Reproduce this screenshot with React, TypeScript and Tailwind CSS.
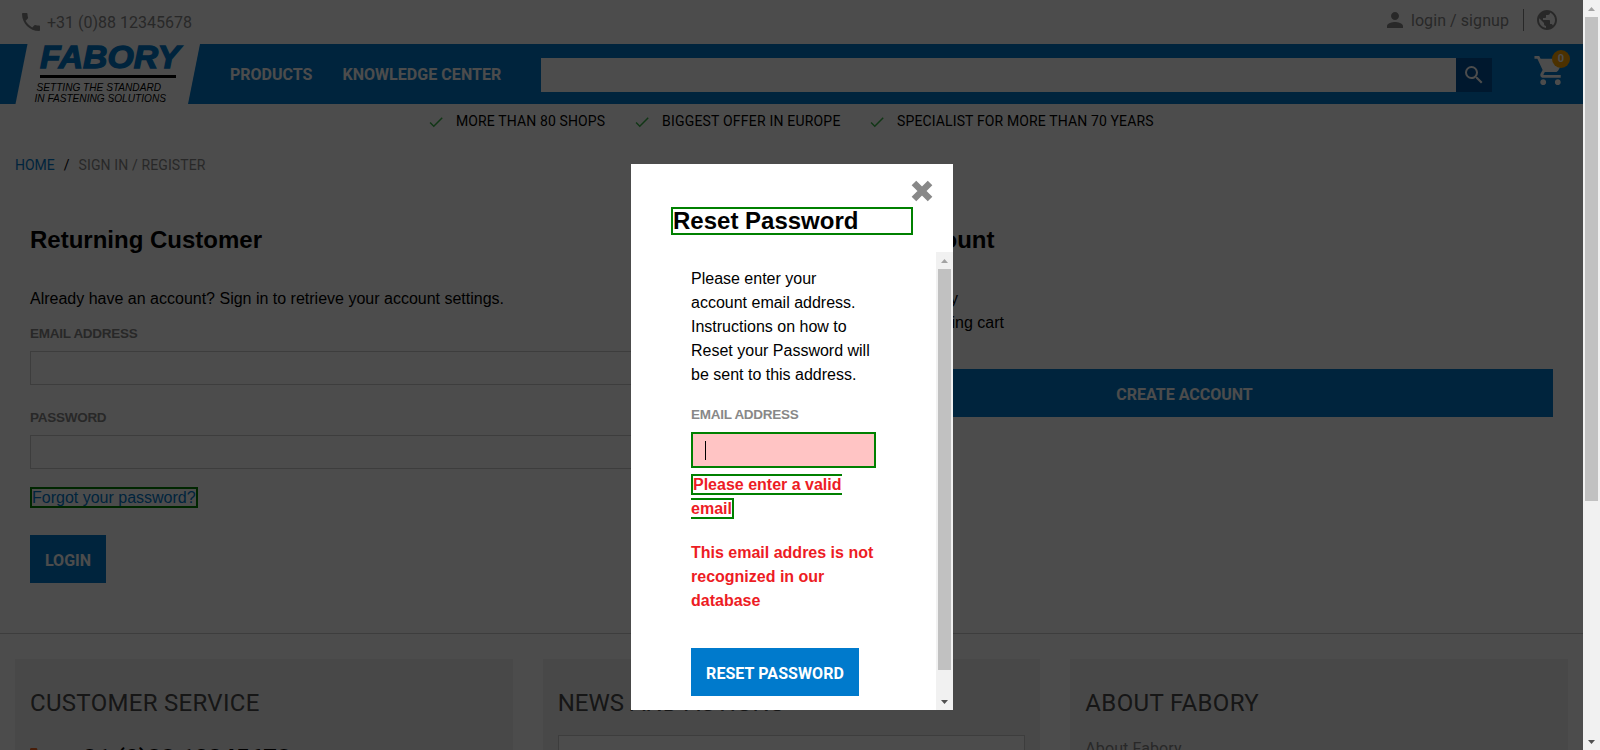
import React from "react";
import { MdPhone, MdPerson, MdPublic, MdSearch, MdShoppingCart, MdCheck } from "react-icons/md";

const arial = "font-['Liberation_Sans',Arial,sans-serif]";
const roboto = "font-['Roboto',sans-serif]";

function Logo() {
  return (
    <svg width="202" height="60" viewBox="0 0 202 60" className="block shrink-0">
      <polygon points="27.500,0 200,0 188,60 15.500,60" fill="#fff" />
      <text x="40" y="24.4" fontFamily="Liberation Sans, sans-serif" fontWeight="700" fontStyle="italic" fontSize="31.500" textLength="140" lengthAdjust="spacingAndGlyphs" fill="#007acc" stroke="#007acc" strokeWidth="1.3">FABORY</text>
      <rect x="40" y="31" width="136" height="3" fill="#000" />
      <text x="36.5" y="47" fontFamily="Liberation Sans, sans-serif" fontStyle="italic" fontSize="10.5" textLength="124.500" lengthAdjust="spacingAndGlyphs">SETTING THE STANDARD</text>
      <text x="34.5" y="58.3" fontFamily="Liberation Sans, sans-serif" fontStyle="italic" fontSize="10.5" textLength="131.500" lengthAdjust="spacingAndGlyphs">IN FASTENING SOLUTIONS</text>
    </svg>
  );
}

function Scrollbar({ thumb }: { thumb: string }) {
  return (
    <div className="flex h-full w-[17px] shrink-0 flex-col items-center bg-[#f1f1f1]">
      <svg width="17" height="17" className="block shrink-0"><path d="M5 11h7L8.500 7z" fill="#a3a3a3" /></svg>
      <div className={`w-[13px] shrink-0 bg-[#c1c1c1] ${thumb}`} />
      <div className="grow" />
      <svg width="17" height="17" className="block shrink-0"><path d="M5 7h7L8.500 11z" fill="#505050" /></svg>
    </div>
  );
}

function Header() {
  return (
    <header className={roboto}>
      <div className="flex h-11 items-center justify-between pl-[19px] pr-6 text-[16px] text-[#888]">
        <div className="flex items-center gap-1">
          <MdPhone size={24} />
          <span className="pt-px">+31 (0)88 12345678</span>
        </div>
        <div className="flex h-full items-center pb-1">
          <MdPerson size={24} />
          <span className="ml-1 pt-px tracking-[0.07px]">login / signup</span>
          <div className="ml-[14px] h-[22px] w-px bg-[#888]" />
          <MdPublic size={24} className="ml-[11px]" />
        </div>
      </div>
      <div className="flex h-[60px] items-start bg-[#007acc] text-white">
        <Logo />
        <nav className="flex h-full items-center gap-[30px] pl-7 pt-[2px] text-[16px] font-bold">
          <a>PRODUCTS</a>
          <a className="tracking-[0.05px]">KNOWLEDGE CENTER</a>
        </nav>
        <div className="ml-auto mt-[14px] h-[34px] w-[915px] bg-white" />
        <div className="mt-[14px] flex h-[34px] w-9 items-center justify-center bg-[#005299]">
          <MdSearch size={24} />
        </div>
        <div className="relative ml-[41px] mr-[15px] mt-[9px] w-[35px]">
          <MdShoppingCart size={35} />
          <span className="absolute -top-[3px] left-[19px] flex size-[18px] items-center justify-center rounded-full bg-[#ffa500] text-[11px] font-bold">0</span>
        </div>
      </div>
    </header>
  );
}

function Usp({ className, children }: { className: string; children: React.ReactNode }) {
  return (
    <div className={`flex items-center gap-[11px] whitespace-nowrap ${className}`}>
      <MdCheck size={18} className="shrink-0 text-[#39b54a]" />
      <span>{children}</span>
    </div>
  );
}

function Usps() {
  return (
    <div className={`flex h-[34px] items-center pl-[427px] pt-px text-[14px] ${roboto}`}>
      <Usp className="w-[206px] tracking-[0.12px]">MORE THAN 80 SHOPS</Usp>
      <Usp className="w-[235px] tracking-[0.2px]">BIGGEST OFFER IN EUROPE</Usp>
      <Usp className="tracking-[0.13px]">SPECIALIST FOR MORE THAN 70 YEARS</Usp>
    </div>
  );
}

function Label({ children }: { children: React.ReactNode }) {
  return <label className="block h-6 text-[13.5px] font-bold leading-6 tracking-[-0.27px] text-[#888]">{children}</label>;
}

function Columns() {
  return (
    <main className={`flex h-[448px] border-b border-[#ccc] px-[30px] pt-10 text-[16px] leading-6 ${arial}`}>
      <section className="w-[746px]">
        <h2 className="text-[24px] font-bold leading-7">Returning Customer</h2>
        <p className="mt-[33px]">Already have an account? Sign in to retrieve your account settings.</p>
        <div className="mt-[11px]"><Label>EMAIL ADDRESS</Label></div>
        <div className="mt-[5px] h-[34px] border border-[#ccc]" />
        <div className="mt-[21px]"><Label>PASSWORD</Label></div>
        <div className="mt-[5px] h-[34px] border border-[#ccc]" />
        <a className="mt-[18px] block h-[21px] w-[168px] border-2 border-[#008000] leading-[17px] text-[#007acc]">Forgot your password?</a>
        <button className={`mt-[27px] block h-12 w-[76px] bg-[#007acc] pt-[3px] font-bold text-white ${roboto}`}>LOGIN</button>
      </section>
      <section className="ml-[40px] w-[737px]">
        <h2 className="pl-[2px] text-[24px] font-bold leading-7">Create Account</h2>
        <p className="mt-[33px] w-[142px] text-right">View order history</p>
        <p className="w-[188px] text-right">Save your shopping cart</p>
        <button className={`mt-[34px] block h-12 w-full bg-[#007acc] pt-[3px] font-bold text-white ${roboto}`}>CREATE ACCOUNT</button>
      </section>
    </main>
  );
}

function Footer() {
  return (
    <footer className={`grid grid-cols-3 gap-[30px] px-[15px] pt-[25px] ${roboto}`}>
      <section className="h-[200px] bg-[#f2f2f2] px-[15px] pt-[28px]">
        <h3 className="text-[24px] leading-8 tracking-[0.3px] text-[#4a4a4a]">CUSTOMER SERVICE</h3>
        <div className="mt-[25px] flex items-start gap-3 text-[24px] font-bold leading-7">
          <MdPhone size={32} className="-ml-1 text-[#f26522]" />
          <span>+31 (0)88 12345678</span>
        </div>
      </section>
      <section className="h-[200px] bg-[#f2f2f2] px-[15px] pt-[28px]">
        <h3 className="text-[24px] leading-8 text-[#4a4a4a]">NEWS AND ACTIONS</h3>
        <div className="mt-4 h-[34px] border border-[#ccc] bg-white" />
      </section>
      <section className="h-[200px] bg-[#f2f2f2] px-[15px] pt-[28px]">
        <h3 className="text-[24px] leading-8 tracking-[0.35px] text-[#4a4a4a]">ABOUT FABORY</h3>
        <p className="mt-[18px] text-[16px] leading-6 tracking-[0.1px] text-[#888]">About Fabory</p>
      </section>
    </footer>
  );
}

function Modal() {
  return (
    <div className={`absolute left-[631px] top-[164px] flex h-[546px] w-[322px] flex-col bg-white text-[16px] leading-6 text-black ${arial}`}>
      <div className="flex h-[88px] flex-col px-10">
        <svg width="22" height="22" viewBox="0 0 22 22" className="-mr-[20px] mt-4 self-end">
          <path d="M5.250 5.250l11.500 11.500M16.750 5.250l-11.500 11.500" stroke="#888" strokeWidth="6.500" strokeLinecap="square" />
        </svg>
        <h2 className="mt-[5px] h-7 border-2 border-[#008000] text-[24px] font-bold leading-6">Reset Password</h2>
      </div>
      <div className="flex h-[458px]">
        <div className="w-[305px] pl-[60px] pt-[15px]">
          <p className="w-[185px]">Please enter your account email address. Instructions on how to Reset your Password will be sent to this address.</p>
          <div className="mt-4"><Label>EMAIL ADDRESS</Label></div>
          <div className="mt-[5px] flex h-9 w-[185px] items-center border-2 border-[#008000] bg-[#ffc4c4] pl-3">
            <div className="h-[19px] w-px bg-black" />
          </div>
          <p className="mt-[5px] w-[185px] font-bold text-[#ed1c24]">
            <span className="border-2 border-[#008000]">Please enter a valid email</span>
          </p>
          <p className="mt-5 w-[190px] font-bold text-[#ed1c24]">This email addres is not recognized in our database</p>
          <button className={`mt-[35px] block h-12 w-[168px] bg-[#007acc] pt-[3px] font-bold tracking-[0.07px] text-white ${roboto}`}>RESET PASSWORD</button>
        </div>
        <Scrollbar thumb="h-[401px]" />
      </div>
    </div>
  );
}

export default function App() {
  return (
    <div className="relative flex h-[750px] w-[1600px] overflow-hidden bg-white text-black">
      <div className="relative h-[750px] w-[1583px] overflow-hidden">
        <Header />
        <Usps />
        <div className={`flex h-12 items-center pl-[15px] pt-[6px] text-[14px] ${roboto}`}>
          <a className="text-[#007acc]">HOME</a>
          <span className="ml-[9px]">/</span>
          <span className="ml-[9px] tracking-[0.12px] text-[#888]">SIGN IN / REGISTER</span>
        </div>
        <Columns />
        <Footer />
        <div className="absolute inset-0 bg-black/70" />
      </div>
      <Scrollbar thumb="h-[484px]" />
      <Modal />
    </div>
  );
}
